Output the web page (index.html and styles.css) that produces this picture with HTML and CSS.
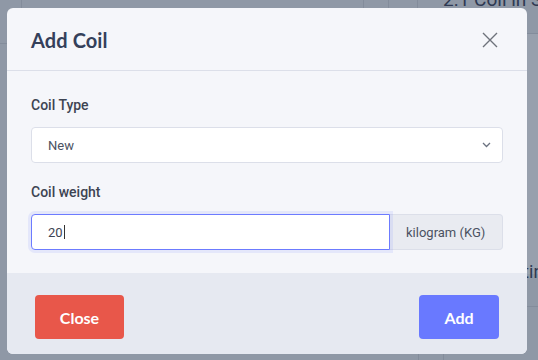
FILE: index.html
```html
<!DOCTYPE html>
<html>
<head>
<meta charset="utf-8">
<link rel="stylesheet" href="styles.css">
</head>
<body>
<div class="page">
  <div class="bg-top">
    <div class="bg-cell c1"></div>
    <div class="bg-cell c2"></div>
    <div class="bg-cell c3"></div>
    <div class="bg-cell c4"></div>
    <div class="bg-cell c5"><span class="bg-title">2.1 Coil in Stock</span></div>
  </div>
  <div class="bg-left-line"></div>
  <div class="bg-right">
    <div class="bg-right-row r1"></div>
    <div class="bg-right-row r2"><span class="bg-text">Setting</span></div>
  </div>
  <div class="bg-bottom">
    <div class="bg-bcell b1"></div>
    <div class="bg-bcell b2"></div>
  </div>
</div>

<div class="modal">
  <div class="modal-header">
    <h2 class="modal-title">Add Coil</h2>
    <svg class="close-x" width="16" height="16" viewBox="0 0 16 16">
      <path d="M1 1 L15 15 M15 1 L1 15" stroke="#6e727b" stroke-width="1.4" fill="none"/>
    </svg>
  </div>
  <div class="modal-body">
    <div class="field">
      <div class="label">Coil Type</div>
      <div class="select">
        <span class="select-text">New</span>
        <svg class="chev" width="9" height="6" viewBox="0 0 9 6">
          <path d="M1 1 L4.5 4.5 L8 1" stroke="#6b7280" stroke-width="1.3" fill="none"/>
        </svg>
      </div>
    </div>
    <div class="field">
      <div class="label">Coil weight</div>
      <div class="input-group">
        <div class="input focus"><span class="input-text">20</span><span class="caret"></span></div>
        <div class="addon">kilogram (KG)</div>
      </div>
    </div>
  </div>
  <div class="modal-footer">
    <button class="btn btn-close">Close</button>
    <button class="btn btn-add">Add</button>
  </div>
</div>
</body>
</html>
```

FILE: styles.css
```css
html, body {
  margin: 0;
  padding: 0;
}
body {
  width: 538px;
  height: 360px;
  overflow: hidden;
  background: #8f98a6;
  font-family: Roboto, "Liberation Sans", sans-serif;
  position: relative;
}
.page {
  width: 538px;
  height: 360px;
  position: relative;
}
.bg-top {
  display: grid;
  grid-template-columns: 22px 342px 25px 29px 1fr;
  height: 12px;
}
.bg-cell {
  border-right: 1px solid #838c9b;
  overflow: hidden;
}
.c5 {
  border-right: none;
  padding-left: 25px;
}
.bg-title {
  display: block;
  margin-top: -11px;
  font-size: 19px;
  line-height: 22px;
  color: #2e3952;
  white-space: nowrap;
}
.bg-left-line {
  width: 7px;
  height: 32px;
  border-bottom: 1px solid #838c9b;
  margin-top: -1px;
}
.bg-right {
  position: absolute;
  left: 527px;
  top: 33px;
  width: 11px;
  height: 272px;
  display: flex;
  flex-direction: column;
  border-top: 1px solid #838c9b;
  border-bottom: 1px solid #838c9b;
  overflow: hidden;
}
.r1 {
  height: 240px;
  background: #98a0ad;
}
.r2 {
  flex: 1;
}
.bg-text {
  display: block;
  margin-left: -30px;
  margin-top: -13px;
  font-size: 18px;
  color: #2e3952;
  white-space: nowrap;
}
.bg-bottom {
  position: absolute;
  left: 0;
  top: 354px;
  display: flex;
  height: 6px;
}
.b1 {
  width: 418px;
  border-right: 1px solid #838c9b;
}
.b2 {
  width: 24px;
  border-right: 1px solid #838c9b;
}

/* modal */
.modal {
  position: absolute;
  left: 7px;
  top: 8px;
  width: 520px;
  height: 346px;
  background: #f5f6fa;
  border-radius: 6px;
  overflow: hidden;
  display: flex;
  flex-direction: column;
}
.modal-header {
  height: 62px;
  border-bottom: 1px solid #dcdfe9;
  display: flex;
  align-items: center;
  justify-content: space-between;
  padding: 0 29px 0 24px;
  box-sizing: content-box;
}
.modal-title {
  margin: 0;
  font-family: "Lato", "Open Sans", sans-serif;
  font-weight: 700;
  font-size: 20px;
  color: #34405a;
  letter-spacing: 0.1px;
  padding-top: 1px;
}
.close-x {
  display: block;
  margin-top: 1px;
}
.modal-body {
  flex: 1;
  padding: 24px 24px 0 24px;
  display: flex;
  flex-direction: column;
  gap: 19px;
}
.label {
  font-size: 14px;
  line-height: 20px;
  font-weight: 500;
  color: #3d4452;
  margin-bottom: 12px;
}
.select {
  height: 36px;
  box-sizing: border-box;
  background: #ffffff;
  border: 1px solid #dcdfe9;
  border-radius: 4px;
  display: flex;
  align-items: center;
  justify-content: space-between;
  padding: 0 11px 0 16px;
}
.select-text {
  font-size: 13px;
  color: #4b5262;
}
.chev {
  display: block;
}
.input-group {
  display: flex;
  height: 36px;
}
.input {
  width: 359px;
  box-sizing: border-box;
  background: #ffffff;
  border: 1px solid #6c7bff;
  border-radius: 4px 0 0 4px;
  display: flex;
  align-items: center;
  padding-left: 16px;
  box-shadow: 0 0 0 3px rgba(108, 123, 255, 0.12);
  position: relative;
  z-index: 1;
}
.input-text {
  font-size: 13px;
  color: #3d4452;
}
.caret {
  display: inline-block;
  width: 1px;
  height: 14px;
  background: #333;
  margin-left: 1px;
}
.addon {
  flex: 1;
  box-sizing: border-box;
  background: #e9ebf1;
  border: 1px solid #dcdfe9;
  border-left: none;
  border-radius: 0 4px 4px 0;
  display: flex;
  align-items: center;
  padding-left: 16px;
  font-size: 13px;
  color: #4b5262;
}
.modal-footer {
  height: 81px;
  box-sizing: border-box;
  background: #e6e9f1;
  display: flex;
  justify-content: space-between;
  align-items: flex-start;
  padding: 22px 28px 0 28px;
}
.btn {
  height: 44px;
  border: none;
  border-radius: 4px;
  color: #ffffff;
  font-family: "Lato", "Open Sans", sans-serif;
  font-weight: 700;
  font-size: 16px;
  padding: 0;
}
.btn-close {
  width: 89px;
  background: #e8574a;
}
.btn-add {
  width: 80px;
  background: #6979ff;
}
```
